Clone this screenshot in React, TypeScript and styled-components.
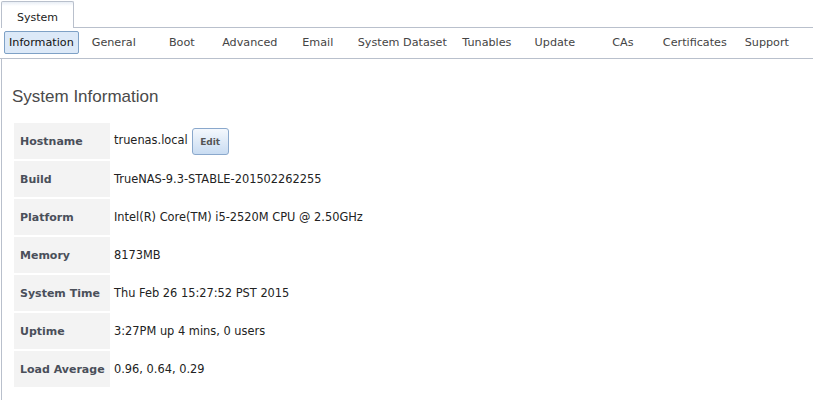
import React from "react";
import styled, { createGlobalStyle } from "styled-components";

const GlobalStyle = createGlobalStyle`
  body {
    margin: 0;
    background: #fff;
    font-family: "DejaVu Sans", Verdana, sans-serif;
    color: #222;
  }
`;

const Page = styled.div`
  width: 813px;
  height: 400px;
  overflow: hidden;
`;

const TabStrip = styled.div`
  display: flex;
  padding: 1px 0 0 1px;
  height: 28px;
  box-sizing: border-box;
`;

const TopTab = styled.div`
  width: 73px;
  height: 27px;
  box-sizing: border-box;
  border: 1px solid #b9c0cc;
  border-bottom: none;
  border-radius: 2px 2px 0 0;
  background: linear-gradient(#e9eef5 0px, #ffffff 4px, #ffffff);
  font-size: 11px;
  color: #222;
  display: flex;
  align-items: center;
  justify-content: center;
  padding-top: 4px;
`;

const TabFiller = styled.div`
  flex: 1;
  border-bottom: 1px solid #b9c0cc;
`;

const SubTabs = styled.div`
  display: flex;
  gap: 2px;
  padding: 3px 0 0 4px;
  height: 31px;
  box-sizing: border-box;
  border-bottom: 1px solid #b9c0cc;
`;

const SubTab = styled.div<{ $active?: boolean }>`
  min-width: 66px;
  height: 23px;
  box-sizing: border-box;
  padding: 0 4px;
  display: flex;
  align-items: center;
  justify-content: center;
  font-size: 11.2px;
  white-space: nowrap;
  border-radius: 2px;
  border: 1px solid ${(p) => (p.$active ? "#7ea1c6" : "transparent")};
  background: ${(p) => (p.$active ? "#dce9f8" : "transparent")};
  color: ${(p) => (p.$active ? "#111" : "#444")};
`;

const Pane = styled.div`
  margin-left: 1px;
  border-left: 1px solid #b9c0cc;
  padding: 28px 0 0 10px;
  height: 400px;
`;

const Heading = styled.h2`
  margin: 0 0 14px;
  font-family: "Liberation Sans", Arial, sans-serif;
  font-weight: normal;
  font-size: 17px;
  color: #4a4a4a;
`;

const InfoTable = styled.table`
  border-spacing: 2px;
  border-collapse: separate;
`;

const Label = styled.th`
  width: 96px;
  height: 36px;
  box-sizing: border-box;
  padding: 0 0 0 6px;
  background: #f3f3f3;
  text-align: left;
  font-size: 11px;
  font-weight: bold;
  color: #4a4f5a;
  white-space: nowrap;
`;

const Value = styled.td`
  padding: 0 0 0 2px;
  font-size: 11.4px;
  color: #222;
  white-space: nowrap;
`;

const ValueRow = styled.div`
  display: flex;
  align-items: center;
  gap: 4px;
`;

const HostName = styled.span`
  margin-top: -3px;
`;

const EditButton = styled.button`
  width: 37px;
  height: 27px;
  padding: 0;
  margin-top: 1px;
  border: 1px solid #8aa8cc;
  border-radius: 3px;
  background: linear-gradient(#f4f8fd, #c9dcf2);
  font-family: "DejaVu Sans", Verdana, sans-serif;
  font-size: 9px;
  font-weight: bold;
  color: #555;
`;

const subTabs = [
  "Information",
  "General",
  "Boot",
  "Advanced",
  "Email",
  "System Dataset",
  "Tunables",
  "Update",
  "CAs",
  "Certificates",
  "Support",
];

const rows: [string, string][] = [
  ["Build", "TrueNAS-9.3-STABLE-201502262255"],
  ["Platform", "Intel(R) Core(TM) i5-2520M CPU @ 2.50GHz"],
  ["Memory", "8173MB"],
  ["System Time", "Thu Feb 26 15:27:52 PST 2015"],
  ["Uptime", "3:27PM up 4 mins, 0 users"],
  ["Load Average", "0.96, 0.64, 0.29"],
];

export default function App() {
  return (
    <Page>
      <GlobalStyle />
      <TabStrip>
        <TopTab>System</TopTab>
        <TabFiller />
      </TabStrip>
      <SubTabs>
        {subTabs.map((t, i) => (
          <SubTab key={t} $active={i === 0}>
            {t}
          </SubTab>
        ))}
      </SubTabs>
      <Pane>
        <Heading>System Information</Heading>
        <InfoTable>
          <tbody>
            <tr>
              <Label>Hostname</Label>
              <Value>
                <ValueRow>
                  <HostName>truenas.local</HostName>
                  <EditButton>Edit</EditButton>
                </ValueRow>
              </Value>
            </tr>
            {rows.map(([k, v]) => (
              <tr key={k}>
                <Label>{k}</Label>
                <Value>{v}</Value>
              </tr>
            ))}
          </tbody>
        </InfoTable>
      </Pane>
    </Page>
  );
}
